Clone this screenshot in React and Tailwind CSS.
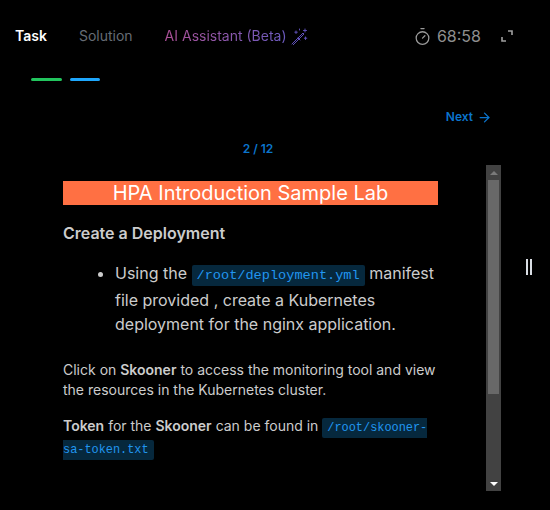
import { ArrowRight, Timer } from "lucide-react";

const Code = ({ children }) => (
  <code className="bg-[#06283d] text-[#2196f0] rounded-[2px] px-[5px] py-[3px] text-[0.85em] font-['Liberation_Mono',monospace]">
    {children}
  </code>
);

const WandIcon = () => (
  <svg width="17" height="17" viewBox="0 0 17 17" fill="none" stroke="#5f50b8" strokeWidth="1" strokeLinecap="round">
    <path d="M1 16 12 5l1 1L2 17" />
    <path d="M14 1v3M12.500 2.500h3M5 3v2.500M3.800 4.200h2.500M14.500 9v2.500M13.300 10.200h2.500M8.500 1v1" />
    <path d="M7 10l2 2" />
  </svg>
);

const ExpandIcon = () => (
  <svg width="12" height="12" viewBox="0 0 12 12" fill="none" stroke="#a0a0a0" strokeWidth="1.600">
    <path d="M7 1h4v4M5 11H1V7" />
  </svg>
);

export default function App() {
  return (
    <div className="w-[550px] h-[510px] bg-black overflow-hidden font-['Inter',sans-serif] flex flex-col">
      {/* top bar */}
      <div className="flex items-center h-[20px] mt-[26px] pl-[15px] pr-[37px] text-sm leading-5">
        <span className="font-semibold text-white">Task</span>
        <span className="ml-[32px] text-[#666c75]">Solution</span>
        <span className="ml-[32px] bg-gradient-to-r from-[#ab4f96] to-[#6a5abf] bg-clip-text text-transparent">
          AI Assistant (Beta)
        </span>
        <span className="ml-[4px]">
          <WandIcon />
        </span>
        <div className="ml-auto flex items-center">
          <Timer size={19} strokeWidth={1.600} color="#9a9a9a" />
          <span className="ml-[5px] text-base text-[#8f8f8f]">68:58</span>
          <span className="ml-[20px]">
            <ExpandIcon />
          </span>
        </div>
      </div>

      {/* steps */}
      <div className="flex gap-2 mt-[32px] ml-[31px]">
        <div className="w-[31px] h-[3px] rounded-full bg-[#22c55e]"></div>
        <div className="w-[30px] h-[3px] rounded-full bg-[#1ea7fd]"></div>
      </div>

      <div className="flex justify-end items-center gap-[4px] w-[492px] mt-[28px] text-xs font-semibold leading-4 text-[#0b74cc]">
        Next
        <ArrowRight size={15} strokeWidth={2} />
      </div>

      <div className="w-[486px] ml-[15px] mt-[16px] text-center text-xs font-semibold leading-4 text-[#0b74cc]">
        2 / 12
      </div>

      <div className="flex items-start mt-[8px]">
        {/* instructions + scrollbar */}
        <div className="ml-[15px] w-[486px] h-[326px] flex shrink-0 overflow-hidden">
          <div className="w-[471px] pl-[48px] pr-[48px] pt-[16px] text-[#cccccc]">
            <h1 className="bg-[#ff7043] text-white text-center text-xl leading-6 h-[24px]">
              HPA Introduction Sample Lab
            </h1>
            <h2 className="mt-[16px] text-base font-semibold leading-6">Create a Deployment</h2>
            <ul className="list-disc pl-[52px] mt-[16px] text-base leading-6">
              <li>
                Using the <Code>/root/deployment.yml</Code> manifest file provided , create a Kubernetes deployment for the nginx application.
              </li>
            </ul>
            <p className="mt-[24px] text-sm leading-5">
              Click on <strong className="font-semibold">Skooner</strong> to access the monitoring tool and view the resources in the Kubernetes cluster.
            </p>
            <p className="mt-[16px] text-sm leading-[19px]">
              <strong className="font-semibold">Token</strong> for the <strong className="font-semibold">Skooner</strong> can be found in <Code>/root/skooner-sa-token.txt</Code>
            </p>
          </div>

          {/* scrollbar */}
          <div className="w-[15px] h-full bg-[#424242] flex flex-col items-center">
            <div className="h-[15px] flex items-center justify-center">
              <div className="w-0 h-0 border-x-[4px] border-x-transparent border-b-[4px] border-b-[#7a7a7a]"></div>
            </div>
            <div className="w-[11px] h-[214px] bg-[#686868]"></div>
            <div className="mt-auto h-[15px] flex items-center justify-center">
              <div className="w-0 h-0 border-x-[4px] border-x-transparent border-t-[4px] border-t-white"></div>
            </div>
          </div>
        </div>

        {/* resize handle */}
        <div className="ml-[25px] mt-[94px] flex gap-[2px] h-[16px]">
          <div className="w-[2px] bg-[#d9dde3]"></div>
          <div className="w-[2px] bg-[#d9dde3]"></div>
        </div>
      </div>
    </div>
  );
}
